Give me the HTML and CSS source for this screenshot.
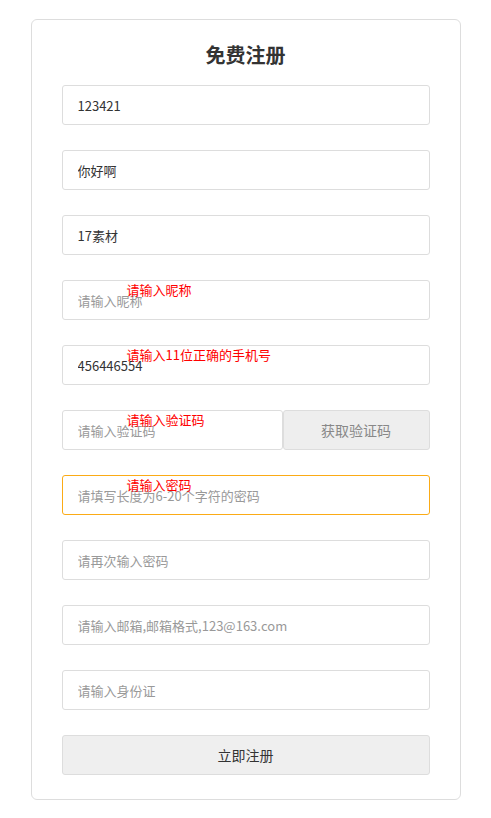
FILE: index.html
```html
<!DOCTYPE html>
<html lang="zh">
<head>
<meta charset="utf-8">
<title>免费注册</title>
<link rel="stylesheet" href="styles.css">
</head>
<body>
<div class="card">
  <h2 class="title">免费注册</h2>
  <form class="form">
    <div class="row"><input class="field" type="text" value="123421"></div>
    <div class="row"><input class="field" type="text" value="你好啊"></div>
    <div class="row"><input class="field" type="text" value="17素材"></div>
    <div class="row"><input class="field" type="text" placeholder="请输入昵称"><span class="err">请输入昵称</span></div>
    <div class="row"><input class="field" type="text" value="456446554"><span class="err">请输入11位正确的手机号</span></div>
    <div class="row split">
      <input class="field code" type="text" placeholder="请输入验证码">
      <button class="getcode" type="button">获取验证码</button>
      <span class="err">请输入验证码</span>
    </div>
    <div class="row"><input class="field focus" type="password" placeholder="请填写长度为6-20个字符的密码"><span class="err">请输入密码</span></div>
    <div class="row"><input class="field" type="password" placeholder="请再次输入密码"></div>
    <div class="row"><input class="field" type="text" placeholder="请输入邮箱,邮箱格式,123@163.com"></div>
    <div class="row"><input class="field" type="text" placeholder="请输入身份证"></div>
    <div class="row"><button class="submit" type="button">立即注册</button></div>
  </form>
</div>
</body>
</html>
```
FILE: styles.css
```css
* { box-sizing: border-box; }
body {
  margin: 0;
  padding-top: 19px;
  background: #fff;
  font-family: "Noto Sans CJK SC", "Noto Sans", sans-serif;
  color: #333;
}
.card {
  width: 430px;
  margin: 0 auto;
  border: 1px solid #ddd;
  border-radius: 6px;
  padding: 20px 30px 24px;
}
.title {
  margin: 0 0 15px;
  text-align: center;
  font-size: 20px;
  line-height: 30px;
  font-weight: bold;
  color: #333;
}
.form {
  display: flex;
  flex-direction: column;
  gap: 25px;
}
.row {
  position: relative;
  display: flex;
  height: 40px;
}
.field {
  flex: 1;
  width: 100%;
  height: 40px;
  border: 1px solid #ddd;
  border-radius: 3px;
  padding: 0 15px;
  font-family: inherit;
  font-size: 13px;
  color: #333;
  outline: none;
  background: #fff;
}
.field::placeholder { color: #999; }
.field.focus { border-color: #f9a825; border-color: #fbab16; }
.field.code { flex: 0 0 221px; width: 221px; }
.getcode {
  flex: 0 0 147px;
  height: 40px;
  border: 1px solid #ddd;
  border-radius: 3px;
  background: #eee;
  color: #888;
  font-family: inherit;
  font-size: 14px;
}
.err {
  position: absolute;
  left: 65px;
  top: 2px;
  color: #f00;
  font-size: 13px;
  line-height: 16px;
}
.submit {
  width: 100%;
  height: 40px;
  border: 1px solid #ddd;
  border-radius: 3px;
  background: #efefef;
  color: #333;
  font-family: inherit;
  font-size: 14px;
}
```
